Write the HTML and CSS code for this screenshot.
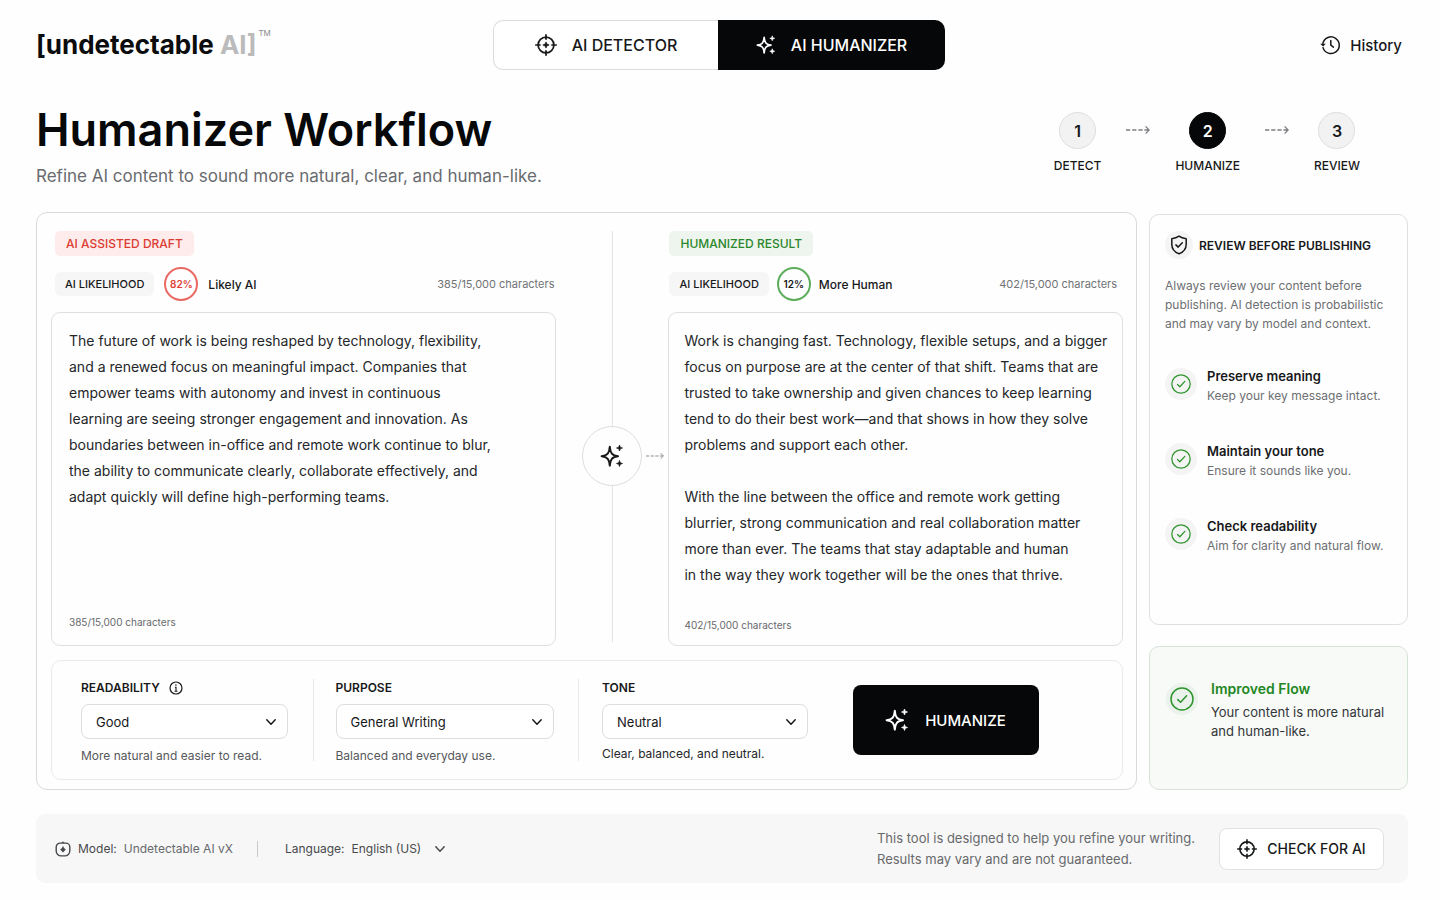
FILE: index.html
```html
<!DOCTYPE html>
<html lang="en">
<head>
<meta charset="utf-8">
<meta name="viewport" content="width=device-width, initial-scale=1">
<title>Humanizer Workflow</title>
<link rel="stylesheet" href="styles.css">
</head>
<body>
<svg class="sprite" aria-hidden="true">
  <symbol id="i-target" viewBox="0 0 24 24"><g fill="none" stroke="currentColor" stroke-width="1.900"><circle cx="12" cy="12" r="8.600"/><path d="M12 .2v6M12 17.800v6M.2 12h6M17.800 12h6"/></g><path d="M12 8.600l1 2.400 2.400 1-2.400 1-1 2.400-1-2.400-2.400-1 2.400-1z" fill="currentColor" stroke="currentColor" stroke-width=".8"/></symbol>
  <symbol id="i-spark" viewBox="0 0 24 24"><path d="M9.800 2.800C10.300 9 12 11.600 18 12.200C12 12.800 10.300 15.400 9.800 21.600C9.300 15.400 7.600 12.800 1.600 12.200C7.600 11.600 9.300 9 9.800 2.800Z" fill="none" stroke="currentColor" stroke-width="2" stroke-linejoin="round"/><path d="M19.500 1l.8 2.200 2.200.8-2.200.8-.8 2.200-.8-2.200-2.200-.8 2.200-.8zM19.500 16.500l.8 2.200 2.200.8-2.200.8-.8 2.200-.8-2.200-2.200-.8 2.200-.8z" fill="currentColor" stroke="currentColor" stroke-width=".7"/></symbol>
  <symbol id="i-check" viewBox="0 0 24 24"><g fill="none" stroke="currentColor" stroke-width="1.500" stroke-linecap="round" stroke-linejoin="round"><circle cx="12" cy="12" r="11"/><path d="M7.800 12.600l2.800 2.700 6-6.500"/></g></symbol>
  <symbol id="i-chevron" viewBox="0 0 12 12"><path d="M1.800 3.800L6 8.200l4.200-4.400" fill="none" stroke="currentColor" stroke-width="1.500" stroke-linecap="round" stroke-linejoin="round"/></symbol>
  <symbol id="i-arrow" viewBox="0 0 24 10"><path d="M0 5h4.200M6.200 5h4.200M12.400 5h4.200M18.400 5H23M19.600 1.400L23.200 5l-3.600 3.600" fill="none" stroke="currentColor" stroke-width="1.300"/></symbol>
  <symbol id="i-history" viewBox="0 0 20 20"><g fill="none" stroke="currentColor" stroke-width="1.500" stroke-linecap="round" stroke-linejoin="round"><path d="M2.900 8.200A8.300 8.300 0 1 1 3 12.600"/><path d="M10.800 5.600v4.600l2.600 1.900"/></g><path d="M.2 8.800h5.600L3.100 11.400z" fill="currentColor"/></symbol>
  <symbol id="i-shield" viewBox="0 0 20 20"><path d="M10 1.200c2 1.500 4.400 2.300 7.200 2.600v5.400c0 4.600-2.700 7.800-7.200 9.600-4.500-1.800-7.200-5-7.200-9.600V3.800C5.600 3.500 8 2.700 10 1.200zM6.900 9.900l2.300 2.200 4.100-4.300" fill="none" stroke="currentColor" stroke-width="1.500" stroke-linecap="round" stroke-linejoin="round"/></symbol>
  <symbol id="i-info" viewBox="0 0 14 14"><circle cx="7" cy="7" r="6" fill="none" stroke="currentColor" stroke-width="1.200"/><path d="M5.900 6.200H7v3.900M5.600 10.200h2.900" fill="none" stroke="currentColor" stroke-width="1.100"/><circle cx="6.900" cy="4" r=".8" fill="currentColor"/></symbol>
  <symbol id="i-model" viewBox="0 0 16 16"><path d="M5.200 2.100h5.600a4 4 0 0 1 4 4v3.800a5 5 0 0 1-5 5H6.200a5 5 0 0 1-5-5V6.100a4 4 0 0 1 4-4z" fill="none" stroke="currentColor" stroke-width="1.400"/><path d="M8 .3l1.500 1.800h-3zM8 4.800l1 2.200 1.800 1.400L8 11.600 5.200 8.400 7 7z" fill="currentColor"/></symbol>
</svg>

<div class="page">
  <header class="topbar">
    <a class="logo" href="#"><span>[undetectable <span class="logo-ai">AI]</span></span><span class="logo-tm">TM</span></a>
    <nav class="tabs" aria-label="Tools">
      <button class="tab" type="button"><svg class="icon-22"><use href="#i-target"/></svg>AI DETECTOR</button>
      <button class="tab tab-active" type="button" aria-current="page"><svg class="icon-20"><use href="#i-spark"/></svg>AI HUMANIZER</button>
    </nav>
    <button class="history" type="button"><svg class="icon-20"><use href="#i-history"/></svg>History</button>
  </header>

  <section class="intro">
    <div>
      <h1 class="title">Humanizer Workflow</h1>
      <p class="subtitle">Refine AI content to sound more natural, clear, and human-like.</p>
    </div>
    <ol class="steps">
      <li class="step"><span class="step-dot">1</span>DETECT</li>
      <li class="step-arrow" aria-hidden="true"><svg class="arrow"><use href="#i-arrow"/></svg></li>
      <li class="step" aria-current="step"><span class="step-dot step-dot-active">2</span>HUMANIZE</li>
      <li class="step-arrow" aria-hidden="true"><svg class="arrow"><use href="#i-arrow"/></svg></li>
      <li class="step"><span class="step-dot">3</span>REVIEW</li>
    </ol>
  </section>

  <main class="workspace">
    <section class="panel">
      <div class="compare">
        <section class="column">
          <div class="column-head">
            <label class="badge badge-red" for="draft">AI ASSISTED DRAFT</label>
            <div class="score-row">
              <span class="chip">AI LIKELIHOOD</span>
              <span class="score score-red">82%</span>
              <span class="verdict">Likely AI</span>
              <span class="count">385/15,000 characters</span>
            </div>
          </div>
          <div class="editor">
            <textarea class="editor-text" id="draft">The future of work is being reshaped by technology, flexibility,
and a renewed focus on meaningful impact. Companies that
empower teams with autonomy and invest in continuous
learning are seeing stronger engagement and innovation. As
boundaries between in-office and remote work continue to blur,
the ability to communicate clearly, collaborate effectively, and
adapt quickly will define high-performing teams.</textarea>
            <p class="editor-count">385/15,000 characters</p>
          </div>
        </section>

        <div class="divider">
          <span class="divider-line divider-line-top"></span>
          <div class="divider-mark">
            <span class="divider-circle"><svg class="icon-24"><use href="#i-spark"/></svg></span>
            <svg class="arrow-small"><use href="#i-arrow"/></svg>
          </div>
          <span class="divider-line"></span>
        </div>

        <section class="column">
          <div class="column-head column-head-result">
            <label class="badge badge-green" for="result">HUMANIZED RESULT</label>
            <div class="score-row score-row-result">
              <span class="chip">AI LIKELIHOOD</span>
              <span class="score score-green">12%</span>
              <span class="verdict">More Human</span>
              <span class="count">402/15,000 characters</span>
            </div>
          </div>
          <div class="editor editor-result">
            <textarea class="editor-text" id="result">Work is changing fast. Technology, flexible setups, and a bigger
focus on purpose are at the center of that shift. Teams that are
trusted to take ownership and given chances to keep learning
tend to do their best work—and that shows in how they solve
problems and support each other.

With the line between the office and remote work getting
blurrier, strong communication and real collaboration matter
more than ever. The teams that stay adaptable and human
in the way they work together will be the ones that thrive.</textarea>
            <p class="editor-count">402/15,000 characters</p>
          </div>
        </section>
      </div>

      <form class="controls">
        <div class="field field-readability">
          <div class="field-label"><label for="readability">READABILITY</label><svg class="icon-14"><use href="#i-info"/></svg></div>
          <div class="select-box"><select class="select" id="readability"><option>Good</option></select><svg class="icon-12"><use href="#i-chevron"/></svg></div>
          <p class="hint">More natural and easier to read.</p>
        </div>
        <div class="field field-purpose">
          <div class="field-label"><label for="purpose">PURPOSE</label></div>
          <div class="select-box"><select class="select" id="purpose"><option>General Writing</option></select><svg class="icon-12"><use href="#i-chevron"/></svg></div>
          <p class="hint">Balanced and everyday use.</p>
        </div>
        <div class="field field-tone">
          <div class="field-label"><label for="tone">TONE</label></div>
          <div class="select-box"><select class="select" id="tone"><option>Neutral</option></select><svg class="icon-12"><use href="#i-chevron"/></svg></div>
          <p class="hint hint-dark">Clear, balanced, and neutral.</p>
        </div>
        <button class="humanize" type="button"><svg class="icon-24"><use href="#i-spark"/></svg>HUMANIZE</button>
      </form>
    </section>

    <aside class="sidebar">
      <section class="card review">
        <h2 class="review-title"><span class="halo halo-small"><svg class="icon-20"><use href="#i-shield"/></svg></span>REVIEW BEFORE PUBLISHING</h2>
        <p class="review-text">Always review your content before publishing. AI detection is probabilistic and may vary by model and context.</p>
        <ul class="checks">
          <li class="check"><span class="halo"><svg class="icon-20 green"><use href="#i-check"/></svg></span><div><h3 class="check-title">Preserve meaning</h3><p class="check-text">Keep your key message intact.</p></div></li>
          <li class="check"><span class="halo"><svg class="icon-20 green"><use href="#i-check"/></svg></span><div><h3 class="check-title">Maintain your tone</h3><p class="check-text">Ensure it sounds like you.</p></div></li>
          <li class="check"><span class="halo"><svg class="icon-20 green"><use href="#i-check"/></svg></span><div><h3 class="check-title">Check readability</h3><p class="check-text">Aim for clarity and natural flow.</p></div></li>
        </ul>
      </section>
      <section class="card flow">
        <span class="halo halo-green"><svg class="icon-24 green"><use href="#i-check"/></svg></span>
        <div>
          <h2 class="flow-title">Improved Flow</h2>
          <p class="flow-text">Your content is more natural and human-like.</p>
        </div>
      </section>
    </aside>
  </main>

  <footer class="footer">
    <div class="model"><svg class="icon-16"><use href="#i-model"/></svg><span>Model:</span><span class="muted">Undetectable AI vX</span></div>
    <div class="language">
      <label for="language">Language:</label>
      <div class="language-box"><select class="language-select" id="language"><option>English (US)</option></select><svg class="icon-12"><use href="#i-chevron"/></svg></div>
    </div>
    <p class="disclaimer">This tool is designed to help you refine your writing.<br>Results may vary and are not guaranteed.</p>
    <button class="check-ai" type="button"><svg class="icon-20"><use href="#i-target"/></svg>CHECK FOR AI</button>
  </footer>
</div>
</body>
</html>
```

FILE: styles.css
```css
* { box-sizing: border-box; }

body {
  margin: 0;
  background: #fefefe;
  color: #17181a;
  font-family: Inter, "Liberation Sans", sans-serif;
  font-size: 13px;
}

h1, h2, h3, p, ol, ul { margin: 0; padding: 0; }
ol, ul { list-style: none; }
svg { flex: none; display: block; }
button, select, textarea { font-family: inherit; color: inherit; margin: 0; }
button { cursor: pointer; }

.sprite { position: absolute; width: 0; height: 0; }
.icon-12 { width: 12px; height: 12px; }
.icon-14 { width: 14px; height: 14px; }
.icon-16 { width: 16px; height: 16px; }
.icon-20 { width: 20px; height: 20px; }
.icon-22 { width: 22px; height: 22px; }
.icon-24 { width: 24px; height: 24px; }
.green { color: #2e942e; }
.muted { color: #67696c; }

.page {
  display: flex;
  flex-direction: column;
  min-height: 100vh;
  padding: 20px 32px 17px 36px;
}

/* Top bar */
.topbar {
  display: grid;
  grid-template-columns: 1fr auto 1fr;
  align-items: center;
  padding-right: 6px;
}
.logo {
  display: flex;
  gap: 2px;
  justify-self: start;
  color: #0b0c0d;
  font-size: 26px;
  font-weight: 700;
  line-height: 32px;
  text-decoration: none;
}
.logo-ai { color: #bbb; }
.logo-tm { color: #8a8a8a; font-size: 8px; font-weight: 400; line-height: 8px; }
.tabs {
  display: grid;
  grid-template-columns: 225px 227px;
  height: 50px;
}
.tab {
  display: flex;
  align-items: center;
  justify-content: center;
  gap: 15px;
  border: 1px solid #dcdcdc;
  border-right: 0;
  border-radius: 10px 0 0 10px;
  background: #fff;
  font-size: 16px;
  font-weight: 500;
}
.tab-active {
  border: 0;
  border-radius: 0 10px 10px 0;
  background: #050708;
  color: #fff;
}
.history {
  display: flex;
  align-items: center;
  gap: 10px;
  justify-self: end;
  padding: 0;
  border: 0;
  background: none;
  font-size: 15px;
  font-weight: 500;
}

/* Heading and progress */
.intro {
  display: flex;
  justify-content: space-between;
  height: 142px;
  padding: 36px 48px 0 0;
}
.title {
  color: #070809;
  font-size: 45px;
  font-weight: 600;
  line-height: 48px;
}
.subtitle {
  margin-top: 10px;
  color: #696b6f;
  font-size: 17px;
  line-height: 24px;
}
.steps {
  display: flex;
  gap: 25px;
  padding-top: 6px;
}
.step {
  display: flex;
  flex-direction: column;
  align-items: center;
  gap: 8px;
  font-size: 12px;
  font-weight: 500;
  line-height: 18px;
}
.step-dot {
  display: grid;
  place-items: center;
  width: 37px;
  height: 37px;
  border: 1px solid #dedede;
  border-radius: 50%;
  background: #f2f2f2;
  font-size: 16px;
  font-weight: 600;
}
.step-dot-active { border-color: #050708; background: #050708; color: #fff; }
.step-arrow { padding-top: 13px; color: #7b7d80; }
.arrow { width: 24px; height: 10px; }
.arrow-small { width: 18px; height: 10px; color: #8b8d90; }

/* Workspace */
.workspace {
  display: grid;
  flex: 1;
  grid-template-columns: minmax(0, 1fr) 259px;
  gap: 12px;
}
.panel {
  display: flex;
  flex-direction: column;
  gap: 14px;
  padding: 18px 13px 9px 14px;
  border: 1px solid #d9dadb;
  border-radius: 11px;
}
.compare {
  display: grid;
  flex: 1;
  grid-template-columns: minmax(0, 506fr) 112px minmax(0, 455fr);
}
.column { display: flex; flex-direction: column; }
.column-head {
  display: flex;
  flex-direction: column;
  align-items: flex-start;
  gap: 11px;
  padding: 0 2px 11px 4px;
}
.column-head-result { padding: 0 6px 11px 1px; }
.badge {
  padding: 0 11px;
  border-radius: 5px;
  font-size: 12px;
  font-weight: 500;
  line-height: 25px;
}
.badge-red { background: #fdeceb; color: #dc3b32; }
.badge-green { background: #eef5ee; color: #2b862b; }
.score-row {
  display: flex;
  align-items: center;
  gap: 10px;
  width: 100%;
}
.score-row-result { gap: 8px; }
.chip {
  padding: 0 10px;
  border-radius: 6px;
  background: #f6f6f6;
  font-size: 11px;
  font-weight: 500;
  line-height: 24px;
}
.score {
  display: grid;
  place-items: center;
  width: 34px;
  height: 34px;
  border: 2px solid;
  border-radius: 50%;
  font-size: 10px;
  font-weight: 600;
}
.score-red { border-color: #e86a63; color: #e03c34; }
.score-green { border-color: #5cad5c; }
.verdict { font-size: 12px; font-weight: 500; }
.count { margin-left: auto; color: #717376; font-size: 11px; }

.editor {
  display: flex;
  flex: 1;
  flex-direction: column;
  padding: 15px 12px 16px 17px;
  border: 1px solid #dedfe0;
  border-radius: 9px;
}
.editor-result { padding: 15px 4px 13px 15px; }
.editor-text {
  flex: 1;
  width: 100%;
  min-height: 264px;
  padding: 0;
  border: 0;
  outline: 0;
  background: none;
  color: #242629;
  font-size: 14px;
  line-height: 26px;
  resize: none;
  overflow: hidden;
}
.editor-count { color: #67696c; font-size: 10px; line-height: 14px; }

.divider {
  display: flex;
  flex-direction: column;
  align-items: center;
  padding-bottom: 4px;
}
.divider-line { flex: 4; width: 1px; background: #e3e4e4; }
.divider-line-top { flex: 5; }
.divider-mark {
  display: grid;
  grid-template-columns: 1fr 60px 1fr;
  align-items: center;
  width: 100%;
}
.divider-circle {
  display: grid;
  grid-column: 2;
  place-items: center;
  height: 60px;
  border: 1px solid #dcdddd;
  border-radius: 50%;
}
.arrow-small { justify-self: center; }

/* Options */
.controls {
  display: grid;
  grid-template-columns: 261fr 266fr 275fr 270fr;
  min-height: 119px;
  padding: 18px 0;
  border: 1px solid #e9eaea;
  border-radius: 10px;
}
.field { height: 82px; }
.field-readability { padding: 0 25px 0 29px; }
.field-purpose { padding: 0 24px 0 22px; border-left: 1px solid #e9eaea; }
.field-tone { padding: 0 45px 0 23px; border-left: 1px solid #e9eaea; }
.field-label {
  display: flex;
  align-items: center;
  gap: 9px;
  margin-bottom: 7px;
  font-size: 12px;
  font-weight: 600;
  line-height: 18px;
}
.select-box, .language-box { display: grid; align-items: center; }
.select-box svg, .language-box svg { grid-area: 1 / 1; justify-self: end; pointer-events: none; }
.select-box svg { margin-right: 11px; }
.select {
  grid-area: 1 / 1;
  appearance: none;
  width: 100%;
  height: 35px;
  padding: 0 14px;
  border: 1px solid #dcddde;
  border-radius: 8px;
  background: #fff;
  font-size: 13px;
}
.hint { margin-top: 8px; color: #56585b; font-size: 12px; line-height: 18px; white-space: nowrap; }
.hint-dark { color: #242629; margin-top: 6px; }
.humanize {
  display: flex;
  align-items: center;
  justify-content: center;
  align-self: center;
  gap: 16px;
  width: 186px;
  height: 70px;
  border: 0;
  border-radius: 8px;
  background: #050708;
  color: #fff;
  font-size: 15px;
  font-weight: 500;
}

/* Sidebar */
.sidebar {
  display: flex;
  flex-direction: column;
  gap: 21px;
  padding-top: 2px;
}
.card { border: 1px solid #dedfe0; border-radius: 10px; }
.review { flex: 1; padding: 16px 14px 0 15px; }
.review-title {
  display: flex;
  align-items: center;
  gap: 6px;
  font-size: 12px;
  font-weight: 600;
  white-space: nowrap;
}
.halo {
  display: grid;
  flex: none;
  place-items: center;
  width: 32px;
  height: 32px;
  border-radius: 50%;
  background: #f3f4f3;
}
.halo-small { width: 28px; height: 28px; }
.halo-green { background: #ebf1eb; }
.review-text {
  margin-top: 17px;
  color: #6d6f72;
  font-size: 12px;
  line-height: 19px;
}
.checks { display: grid; gap: 35px; margin-top: 33px; }
.check { display: flex; gap: 10px; }
.check-title { font-size: 13px; font-weight: 600; line-height: 20px; }
.check-text { color: #6d6f72; font-size: 12px; line-height: 20px; white-space: nowrap; }
.check .halo { margin-top: 2px; }
.flow {
  display: flex;
  gap: 13px;
  height: 144px;
  padding: 32px 16px 0;
  border-color: #d8e3d8;
  background: #f7faf7;
}
.flow .halo { margin-top: 4px; }
.flow-title { color: #238723; font-size: 14px; font-weight: 600; line-height: 20px; }
.flow-text { margin-top: 4px; color: #333538; font-size: 13px; line-height: 19px; }

/* Footer */
.footer {
  display: flex;
  align-items: center;
  min-height: 69px;
  margin-top: 24px;
  padding: 0 24px 0 19px;
  border-radius: 9px;
  background: #f7f7f7;
  color: #47494c;
  font-size: 12px;
}
.model { display: flex; align-items: center; gap: 7px; padding-right: 24px; border-right: 1px solid #c8c9ca; }
.language { display: flex; align-items: center; gap: 7px; padding-left: 27px; }
.language-select {
  grid-area: 1 / 1;
  appearance: none;
  padding: 0 24px 0 0;
  border: 0;
  background: none;
  font-size: 12px;
}
.disclaimer {
  margin-left: auto;
  color: #67696c;
  font-size: 13px;
  line-height: 21px;
}
.check-ai {
  display: flex;
  align-items: center;
  justify-content: center;
  gap: 10px;
  width: 165px;
  height: 42px;
  margin-left: 24px;
  border: 1px solid #e1e2e2;
  border-radius: 8px;
  background: #fff;
  color: #17181a;
  font-size: 14px;
  font-weight: 500;
}
```
